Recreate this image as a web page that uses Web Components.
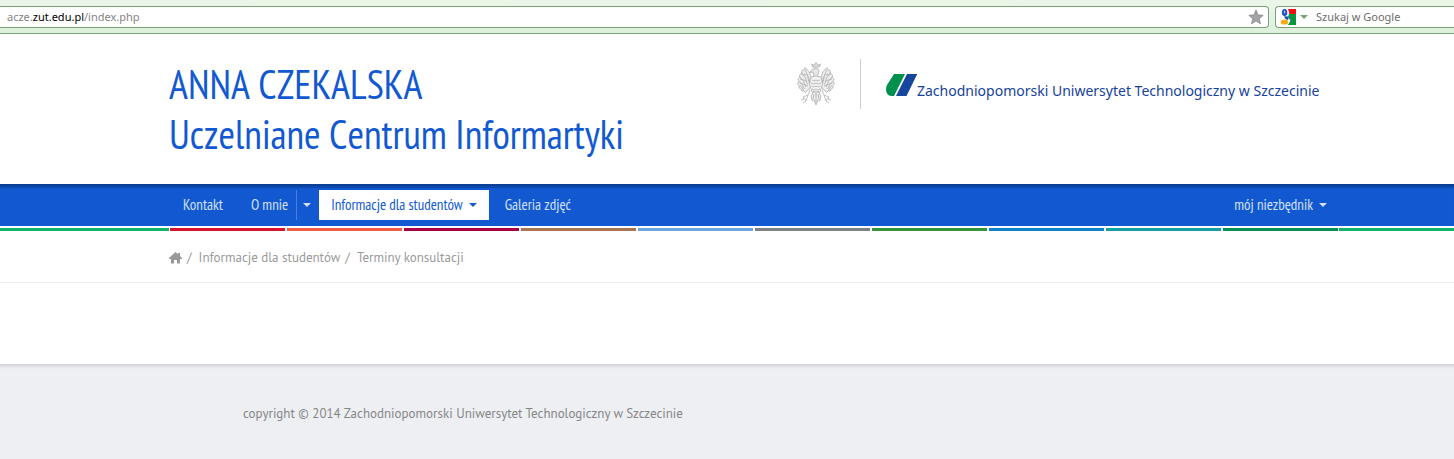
<!DOCTYPE html>
<html lang="pl">
<head>
<meta charset="utf-8">
<title>Anna Czekalska</title>
<style>
body { margin: 0; background: #fff; font-family: "PT Sans", "Open Sans", sans-serif; --left: 169px; --right: 115px; --blue: #1259d1; }
</style>
</head>
<body>
<browser-bar></browser-bar>
<site-header>
  <span slot="name">ANNA CZEKALSKA</span>
  <span slot="unit">Uczelniane Centrum Informartyki</span>
</site-header>
<site-nav></site-nav>
<colour-stripes></colour-stripes>
<bread-crumbs></bread-crumbs>
<site-footer>copyright © 2014 Zachodniopomorski Uniwersytet Technologiczny w Szczecinie</site-footer>

<script>
const define = (name, html) => {
  const tpl = document.createElement('template');
  tpl.innerHTML = html;
  customElements.define(name, class extends HTMLElement {
    constructor() {
      super();
      this.attachShadow({ mode: 'open' }).append(tpl.content.cloneNode(true));
    }
  });
};

define('browser-bar', `
<style>
:host { display: flex; gap: 6px; box-sizing: border-box; height: 34px; padding-top: 6px; align-items: flex-start;
  background: linear-gradient(#eaf6e9, #dcf0db); border-bottom: 1px solid #7b9f78; font: 11px/20px "Noto Sans", sans-serif; }
.field { box-sizing: border-box; height: 22px; border: 1px solid #7b9f78; background: #fff; display: flex; align-items: center; }
.url { flex: 1; border-left: 0; border-radius: 0 4px 4px 0; padding: 0 4px 0 7px; color: #858585; justify-content: space-between; }
.url b { font-weight: 400; color: #000; }
.search { flex: 0 0 179px; min-width: 0; border-right: 0; border-radius: 4px 0 0 4px; padding-left: 4px; }
button { border: 0; padding: 0; background: none; display: flex; }
.engine { gap: 4px; align-items: center; }
input { border: 0; padding: 0; margin: 0 0 0 8px; width: 0; min-width: 0; flex: 1; font: inherit; background: none; outline: 0; }
input::placeholder { color: #6d6d6d; opacity: 1; }
</style>
<div class="field url">
  <div role="textbox" aria-label="Adres">acze.<b>zut.edu.pl</b>/index.php</div>
  <button aria-label="Dodaj do zakładek"><svg width="16" height="16" viewBox="0 0 16 16"><path d="M8 1l2 4.900 5.200.4-4 3.400 1.300 5.100L8 12l-4.500 2.800 1.300-5.100-4-3.400L6 5.900z" fill="#a3a4a8" stroke="#85868a" stroke-width=".8"/></svg></button>
</div>
<div class="field search">
  <button class="engine" aria-label="Wyszukiwarka">
    <svg width="16" height="16" viewBox="0 0 16 16"><path d="M0 0h16v16H0z" fill="#fff"/><path d="M8 0h8v5H9.500z" fill="#f00d0d"/><path d="M9 5h7v11H8l2.500-4.500L8 8z" fill="#0b9444"/><ellipse cx="4.600" cy="3.500" rx="2.700" ry="3.600" fill="#1c50c0"/><ellipse cx="4.600" cy="3" rx=".7" ry="1.600" fill="#b8ccf3"/><path d="M4 7.500q4-1 4.500 1t-1 2.500l-2-1z" fill="#1c50c0"/><ellipse cx="4.500" cy="13" rx="3.700" ry="2.600" fill="#f5ad13"/></svg>
    <svg width="8" height="4" viewBox="0 0 8 4"><path d="M0 0h8L4 4z" fill="#7b9f78"/></svg>
  </button>
  <input type="text" placeholder="Szukaj w Google" aria-label="Szukaj w Google">
</div>`);

define('site-header', `
<style>
:host { display: flex; justify-content: space-between; align-items: flex-start; box-sizing: border-box; min-height: 150px;
  padding: 25px var(--right) 0 var(--left); }
h1 { margin: 0; font: 400 40px/50px "PT Sans Narrow", sans-serif; font-kerning: none; color: var(--blue); }
h1 ::slotted(span) { display: block; }
.brand { flex: 0 0 542px; display: flex; align-items: center; height: 50px; }
.line { width: 1px; height: 50px; background: #ccc; margin: 0 25px; }
a { display: flex; align-items: center; color: #17429b; text-decoration: none; font: 14px/20px "Trebuchet MS", "Noto Sans", sans-serif; white-space: nowrap; padding-top: 2px; }
a span { padding-top: 12px; }
</style>
<h1><slot name="name"></slot><slot name="unit"></slot></h1>
<div class="brand">
  <svg width="38" height="44" viewBox="0 0 38 44" fill="none" stroke="#b0b0b0" stroke-width=".8" stroke-linejoin="round">
    <path d="M15.500 5l-.8-3 2.300 1.300L19 .6l2 2.700L23.300 2l-.8 3z" fill="#ddd"/>
    <path d="M16 7q3-2 5.500.5 1.500 2-.5 4.500-1 2 .5 4h-6q2.500-3 .5-6l-3 .8q.5-2.800 3-3.800z" fill="#e6e6e6"/>
    <path d="M14 15Q13 9 8 5.500q0 3-3 3Q5 12 2.500 13q1 2-1.500 4 2 2-.5 5 2.500 1 1.500 4 2.500 0 2.500 3 2.500-1 4 1.500 1-2.500 3-2.500l3-5z" fill="#ececec"/>
    <path d="M8 7.500q3 6 4 13M5 10.500q4 5 5.500 12M3 15q4 3 6 10M1.500 19q4 2 6 8M2.500 23q3 1 4 6M10 12q3 5 3 11M4 12l5 1M3 17l7 2M3 21l8 3"/>
    <g transform="matrix(-1 0 0 1 38 0)"><path d="M14 15Q13 9 8 5.500q0 3-3 3Q5 12 2.500 13q1 2-1.500 4 2 2-.5 5 2.500 1 1.500 4 2.500 0 2.500 3 2.500-1 4 1.500 1-2.500 3-2.500l3-5z" fill="#ececec"/><path d="M8 7.500q3 6 4 13M5 10.500q4 5 5.500 12M3 15q4 3 6 10M1.500 19q4 2 6 8M2.500 23q3 1 4 6M10 12q3 5 3 11M4 12l5 1M3 17l7 2M3 21l8 3"/></g>
    <path d="M14 15q5-2 10 0l1.500 7-2.500 8h-8l-2.500-8z" fill="#f2f2f2"/>
    <path d="M15 18q2 2 4 0 2 2 4 0M14 21q2.500 2 5 0 2.500 2 5 0M14.500 24q2.500 2 4.500 0 2 2 4.500 0M15 27q2 2 4 0 2 2 4 0"/>
    <path d="M16 30l-2 5 1.500 4 1.500-1 2 5 2-5 1.500 1 1.500-4-2-5zM19 31v10M17 32l-1 5M21 32l1 5" fill="#ececec"/>
    <path d="M13 28l-2 5-5 2 1 2-3 1M11 33l-2 6M7 36l2 3-3 1.500M25 28l2 5 5 2-1 2 3 1M27 33l2 6M31 36l-2 3 3 1.500"/>
  </svg>
  <span class="line"></span>
  <a href="#"><svg width="31" height="23" viewBox="0 0 31 23"><path d="M8 0h11L8 22H5Q0 21 0 15q0-2 1-4z" fill="#00904e"/><path d="M21 0h10.300L20.500 22H10z" fill="#17469e"/></svg><span>Zachodniopomorski Uniwersytet Technologiczny w Szczecinie</span></a>
</div>`);

define('site-nav', `
<style>
:host { display: block; background: var(--blue); border-top: 2px solid #0b3f94; box-shadow: inset 0 2px 1px #0d48aa; }
nav { display: flex; align-items: center; height: 40px; padding: 0 var(--right) 2px var(--left); box-sizing: border-box; font: 15px/30px "PT Sans Narrow", sans-serif; }
a { color: #d3e0f6; text-decoration: none; padding: 0 14px; }
.short { padding-right: 8px; }
button { height: 30px; padding: 0 6px; border: 0; border-left: 1px solid #4880dc; background: none; color: #d3e0f6; display: flex; align-items: center; }
.caret { display: inline-block; border: 4px solid transparent; border-top-color: currentColor; border-bottom: 0; vertical-align: middle; }
a .caret { margin: 0 0 2px 6px; }
.active { background: #fff; color: var(--blue); padding: 0 12px; margin: 0 2px; }
.last { margin-left: auto; padding-right: 12px; }
</style>
<nav>
  <a href="#">Kontakt</a>
  <a href="#" class="short">O mnie</a>
  <button aria-label="Rozwiń"><span class="caret"></span></button>
  <a href="#" class="active">Informacje dla studentów<span class="caret"></span></a>
  <a href="#">Galeria zdjęć</a>
  <a href="#" class="last">mój niezbędnik<span class="caret"></span></a>
</nav>`);

define('colour-stripes', `
<style>
:host { display: flex; gap: 1px; height: 3px; padding-top: 2px; }
.edge { background: #11b36a; flex: 0 0 var(--left); }
.edge.end { flex-basis: var(--right); }
.row { flex: 1; display: grid; grid-template-columns: repeat(10, 1fr); gap: 2px; }
</style>
<div class="edge"></div>
<div class="row">
  <i style="background:#d8142d"></i><i style="background:#ef5c41"></i><i style="background:#a80045"></i><i style="background:#a87454"></i><i style="background:#6ca6df"></i><i style="background:#7c7f83"></i><i style="background:#339439"></i><i style="background:#0f80ca"></i><i style="background:#169da6"></i><i style="background:#058e55"></i>
</div>
<div class="edge end"></div>`);

define('bread-crumbs', `
<style>
:host { display: block; min-height: 133px; color: #999; font-size: 13px; line-height: 20px; }
nav { display: flex; align-items: center; box-sizing: border-box; height: 52px; padding: 2px var(--right) 0 var(--left); border-bottom: 1px solid #ececec; }
a { color: inherit; text-decoration: none; }
svg { display: block; }
i { font-style: normal; margin: 0 7px 0 5px; }
</style>
<nav aria-label="Ścieżka">
  <a href="#" aria-label="Start"><svg width="13" height="12" viewBox="0 0 13 12"><path d="M6.500 0L9 2.200V1h2v3l2 2v1h-2v4.500H8V8H5v3.500H2V7H0V6z" fill="#999"/></svg></a><i>/</i>
  <a href="#">Informacje dla studentów</a><i>/</i>
  <a href="#">Terminy konsultacji</a>
</nav>`);

define('site-footer', `
<style>
:host { display: block; min-height: 95px; box-sizing: border-box; padding: 40px var(--right) 35px calc(var(--left) + 74px);
  background: linear-gradient(#d3d4d9, #edeff3 5px); color: #868686; font-size: 13px; line-height: 20px; }
</style>
<footer><slot></slot></footer>`);
</script>
</body>
</html>
